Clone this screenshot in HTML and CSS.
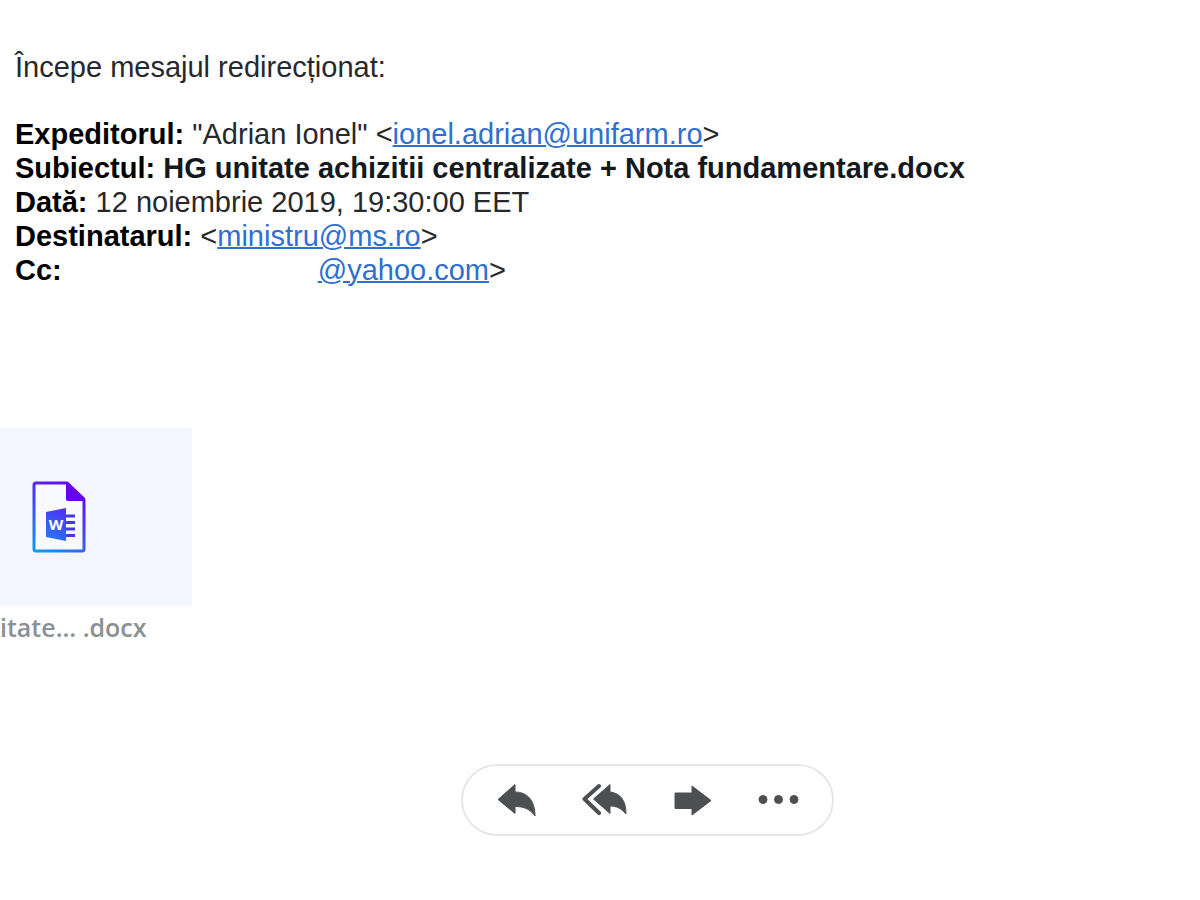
FILE: index.html
```html
<!DOCTYPE html>
<html lang="ro">
<head>
    <meta charset="UTF-8">
    <meta name="viewport" content="width=device-width, initial-scale=1.0">
    <title>Mesaj redirecționat</title>
    <link rel="stylesheet" href="styles.css">
</head>
<body>
<main class="message">
    <p class="intro">Începe mesajul redirecționat:</p>
    <div class="headers">
        <div><b>Expeditorul:</b> "Adrian Ionel" &lt;<a href="mailto:ionel.adrian@unifarm.ro">ionel.adrian@unifarm.ro</a>&gt;</div>
        <div><b>Subiectul:</b> <b class="subject">HG unitate achizitii centralizate + Nota fundamentare.docx</b></div>
        <div><b>Dată:</b> 12 noiembrie 2019, 19:30:00 EET</div>
        <div><b>Destinatarul:</b> &lt;<a href="mailto:ministru@ms.ro">ministru@ms.ro</a>&gt;</div>
        <div><b>Cc:</b><span class="hidden-name"></span><a href="#">@yahoo.com</a>&gt;</div>
    </div>
</main>
<section class="attachment">
    <div class="preview">
        <svg width="54" height="72" viewBox="0 0 54 72">
            <defs>
                <linearGradient id="doc" gradientUnits="userSpaceOnUse" x1="46" y1="4" x2="4" y2="70">
                    <stop offset="0" stop-color="#6a00f0"></stop>
                    <stop offset="0.5" stop-color="#4248f4"></stop>
                    <stop offset="1" stop-color="#1499ee"></stop>
                </linearGradient>
            </defs>
            <path d="M3 2H35L52 19V68Q52 70 50 70H4Q2 70 2 68V4Q2 2 4 2Z" fill="#f8faff" stroke="url(#doc)" stroke-width="3" stroke-linejoin="round"></path>
            <path d="M34 1H36L53 17V20H36Q34 20 34 18Z" fill="#6a00f0"></path>
            <path d="M14 31L34 27V60L14 56Z" fill="url(#doc)"></path>
            <path d="M34 35H43M34 41.5H43M34 48H43M34 54.5H43" stroke="#4a35ee" stroke-width="3"></path>
            <text class="letter" x="24" y="49" text-anchor="middle">W</text>
        </svg>
    </div>
    <div class="filename">itate... .docx</div>
</section>
<div class="footer">
    <div class="actions">
        <button type="button" aria-label="Răspunde">
            <svg width="40" height="36" viewBox="0 0 40 36">
                <path d="M1 17.5L18 2.5V10C30 10 38 18 38 34C33 27 27 24.5 18 24.5V31.5Z"></path>
            </svg>
        </button>
        <button type="button" aria-label="Răspunde tuturor">
            <svg width="46" height="36" viewBox="0 0 46 36">
                <path class="line" d="M17 4L2.5 17L17 31"></path>
                <path d="M11.5 17L28 2.5V10C38 11 44 18 44 32C39 26 34 24 28 24V31.5Z"></path>
            </svg>
        </button>
        <button type="button" aria-label="Redirecționează">
            <svg width="40" height="36" viewBox="0 0 40 36">
                <path d="M2 11H19V4L38 18.5L19 33V26.5H2Z"></path>
            </svg>
        </button>
        <button type="button" aria-label="Mai multe">
            <svg width="42" height="36" viewBox="0 0 42 36">
                <circle cx="5" cy="17.5" r="4"></circle>
                <circle cx="20.5" cy="17.5" r="4"></circle>
                <circle cx="36" cy="17.5" r="4"></circle>
            </svg>
        </button>
    </div>
</div>
</body>
</html>
```
FILE: styles.css
```css
body {
    font-family: "Liberation Sans", Arial, sans-serif;
    font-size: 29px;
    line-height: 34px;
    margin: 0;
    color: #26282c;
    background-color: #fff;
}
.message {
    padding: 50px 15px 0;
}
.intro {
    margin: 0 0 33px;
}
b {
    color: #000;
}
.subject {
    color: #15181c;
}
a {
    color: #2f6fd0;
    text-decoration-thickness: 2px;
}
.hidden-name {
    display: inline-block;
    width: 256px;
}
.attachment {
    width: 192px;
    margin-top: 141px;
}
.preview {
    display: flex;
    align-items: center;
    height: 178px;
    padding-left: 32px;
    background-color: #f3f6ff;
}
.letter {
    font-family: "Open Sans", sans-serif;
    font-size: 15px;
    font-weight: bold;
    fill: #fff;
}
.filename {
    padding-top: 4px;
    font-family: "Open Sans", "Noto Sans", sans-serif;
    font-size: 25px;
    font-weight: 600;
    color: #8a9095;
    white-space: nowrap;
}
.footer {
    display: flex;
    justify-content: center;
    margin-top: 120px;
    padding-left: 94px;
}
.actions {
    display: flex;
    justify-content: space-between;
    align-items: center;
    padding: 16px 32px 16px 34px;
    gap: 45px;
    border: 2px solid #e6e7e8;
    border-radius: 36px;
}
button {
    display: flex;
    padding: 0;
    border: none;
    background: none;
    cursor: pointer;
}
button svg {
    fill: #4d5052;
    stroke: #4d5052;
    stroke-linejoin: round;
}
.line {
    fill: none;
    stroke-width: 4px;
    stroke-linecap: round;
}
```
